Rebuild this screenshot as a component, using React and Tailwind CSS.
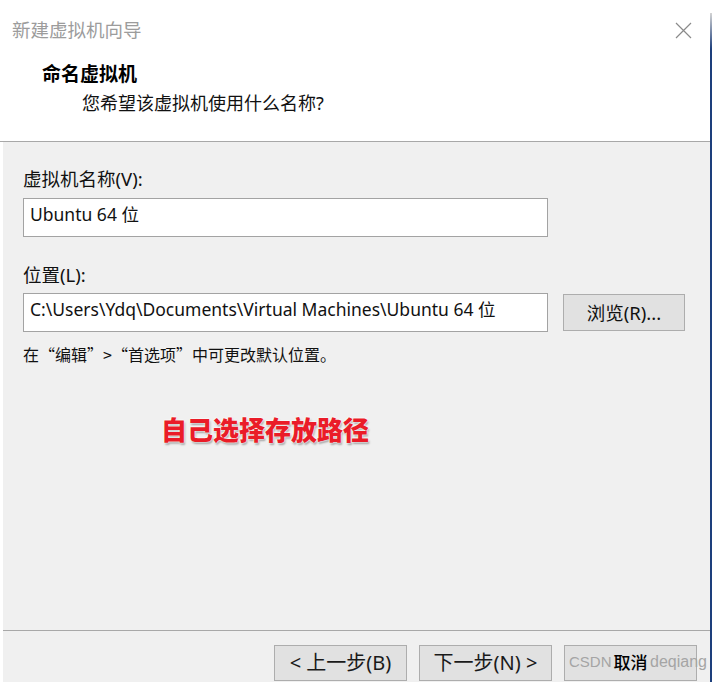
import React from "react";

const font = "font-['Noto_Sans','Noto_Sans_CJK_SC',sans-serif]";

function CloseIcon() {
  return (
    <svg width="17" height="17" viewBox="0 0 17 17" className="block">
      <path d="M1 1 L16 16 M16 1 L1 16" stroke="#8a8a8a" strokeWidth="1.2" fill="none" />
    </svg>
  );
}

function Button({ children, className = "text-[20px] text-[#1a1a1a]" }) {
  return (
    <div
      className={`h-[36px] w-[133px] flex items-center justify-center bg-[#e1e1e1] border border-[#adadad] ${className}`}
    >
      {children}
    </div>
  );
}

export default function App() {
  return (
    <div className={`w-[722px] h-[682px] overflow-hidden bg-white flex ${font}`}>
      {/* dialog */}
      <div className="w-[710px] h-full flex flex-col">
        {/* header */}
        <div className="h-[142px] bg-white border-b border-[#a8a8a8] flex flex-col">
          <div className="flex items-center justify-between pl-[12px] pr-[18px] pt-[17px]">
            <span className="text-[18.5px] leading-[26px] text-[#9c9c9c]">新建虚拟机向导</span>
            <CloseIcon />
          </div>
          <div className="pl-[42px] pt-[19px] text-[19px] leading-[24px] font-bold text-black">命名虚拟机</div>
          <div className="pl-[82px] pt-[5px] text-[18px] leading-[24px] text-[#111]">
            您希望该虚拟机使用什么名称?
          </div>
        </div>

        {/* body */}
        <div className="ml-[3px] h-[489px] bg-[#f0f0f0] border-b border-[#a8a8a8] pl-[20px] pt-[25px] text-[17.5px] text-[#111]">
          <div className="leading-[24px] text-[18.5px]">虚拟机名称(V):</div>
          <div className="mt-[7px] w-[525px] h-[39px] bg-white border border-[#a3a3a3] pl-[6px] flex items-start pt-[3px] leading-[24px]">
            Ubuntu 64 位
          </div>

          <div className="mt-[26px] leading-[24px] text-[18.5px]">位置(L):</div>
          <div className="mt-[6px] flex items-center gap-[15px]">
            <div className="w-[525px] h-[39px] bg-white border border-[#a3a3a3] pl-[6px] pt-[3px] leading-[24px] whitespace-nowrap overflow-hidden">
              C:\Users\Ydq\Documents\Virtual Machines\Ubuntu 64 位
            </div>
            <div className="w-[122px] h-[37px] bg-[#e1e1e1] border border-[#adadad] flex items-center justify-center text-[18.5px]">
              浏览(R)...
            </div>
          </div>
          <div className="mt-[10px] leading-[24px] text-[16px] font-['Noto_Sans_CJK_SC',sans-serif]">
            在“编辑”&gt;“首选项”中可更改默认位置。
          </div>

          <div className="mt-[48px] ml-[138px] text-[26px] leading-[32px] font-black text-[#ea1c28] [text-shadow:0_0_2px_#fff,0_0_2px_#fff,1px_2px_2px_rgba(0,0,0,0.35)]">
            自己选择存放路径
          </div>
        </div>

        {/* footer */}
        <div className="ml-[3px] flex-1 bg-[#f0f0f0] flex justify-end gap-[12px] pt-[14px] pr-[13px]">
          <Button>&lt; 上一步(B)</Button>
          <Button>下一步(N) &gt;</Button>
          <div className="relative">
            <Button className="text-black font-medium text-[17px]">取消</Button>
            <span className="absolute left-[5px] top-[5px] text-[15px] leading-[24px] text-[#a5a5a5] font-['Liberation_Sans',sans-serif]">
              CSDN
            </span>
            <span className="absolute left-[86px] top-[5px] text-[16px] leading-[24px] text-[#a5a5a5] font-['Liberation_Sans',sans-serif]">
              deqiang
            </span>
          </div>
        </div>
      </div>

      {/* window edge */}
      <div className="mt-[13px] w-[2px] h-full bg-[linear-gradient(to_bottom,#d4d4d4_0px,#1d3f7c_36px,#1d3f7c_100%)]" />
    </div>
  );
}
